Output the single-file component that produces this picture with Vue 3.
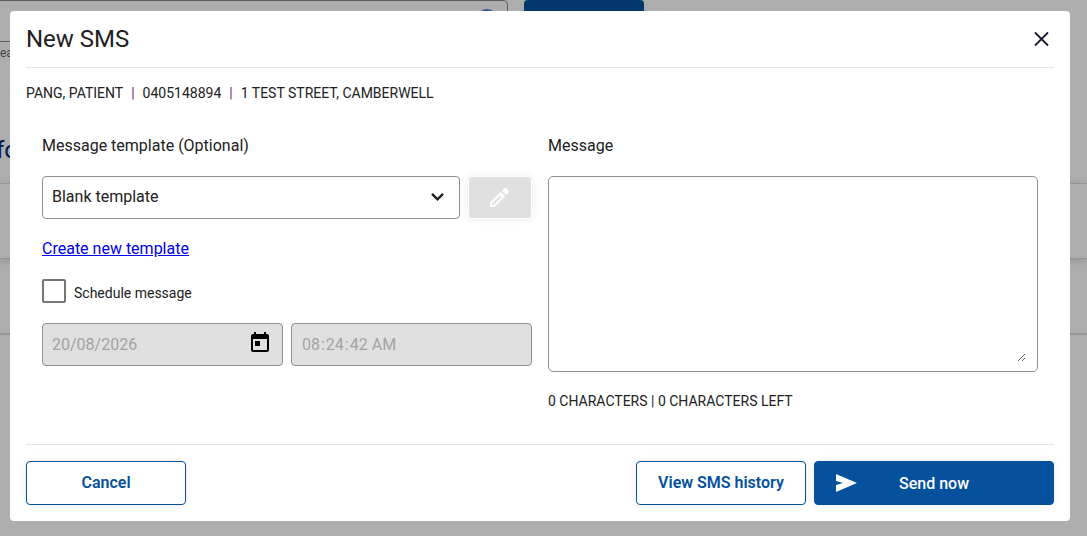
<script setup>
import { ref, computed } from 'vue'

const patient = ['PANG, PATIENT', '0405148894', '1 TEST STREET, CAMBERWELL']
const template = ref('blank')
const scheduled = ref(false)
const date = ref('20/08/2026')
const time = ref('08:24:42')
const message = ref('')
const count = computed(() => message.value.length)
</script>

<template>
  <div class="stage">
    <div class="page" aria-hidden="true">
      <div class="search-row">
        <div class="search-field"><span class="search-dot"></span></div>
        <div class="search-button"></div>
      </div>
      <div class="search-hint">ea</div>
      <div class="page-title">fo</div>
      <div class="panel"></div>
      <div class="page-rest"></div>
    </div>

    <div class="overlay">
      <section class="dialog" role="dialog" aria-labelledby="dialog-title">
        <header class="head">
          <h1 id="dialog-title">New SMS</h1>
          <button class="close" type="button" aria-label="Close">
            <svg viewBox="0 0 24 24" width="24" height="24">
              <path d="M5 5.500 18 18.500M18 5.500 5 18.500" fill="none" stroke="#1f1a33" stroke-width="1.8" />
            </svg>
          </button>
        </header>

        <div class="patient">
          <template v-for="(item, i) in patient" :key="item">
            <span v-if="i" class="bar">|</span>
            <span>{{ item }}</span>
          </template>
        </div>

        <div class="body">
          <div class="column">
            <label class="label" for="template">Message template (Optional)</label>
            <div class="template-row">
              <div class="select-wrap">
                <select id="template" v-model="template" class="field">
                  <option value="blank">Blank template</option>
                </select>
                <svg class="chevron" viewBox="0 0 24 24" width="24" height="24">
                  <path d="M7 9.800 12.500 15.300 18 9.800" fill="none" stroke="#212121" stroke-width="2.4" />
                </svg>
              </div>
              <button class="edit" type="button" disabled aria-label="Edit template">
                <svg viewBox="0 0 24 24" width="24" height="24" fill="#fff">
                  <path d="M2 16.500V21h4.500L17.200 10.300 12.700 5.800 2 16.500zM5.500 19H4v-1.500l8-8 1.500 1.500z" fill-rule="evenodd" />
                  <path d="M20.400 7.100a1.800 1.800 0 0 0 0-2.500l-2-2a1.800 1.800 0 0 0-2.500 0L13.900 4.600l4.500 4.500z" />
                </svg>
              </button>
            </div>
            <div class="link-row"><a href="#">Create new template</a></div>
            <label class="schedule">
              <input v-model="scheduled" type="checkbox" />
              <span>Schedule message</span>
            </label>
            <div class="when">
              <div class="date-wrap">
                <input v-model="date" class="field" type="text" aria-label="Date" :disabled="!scheduled" />
                <svg class="calendar" viewBox="0 0 24 24" width="24" height="24">
                  <path fill-rule="evenodd" d="M6 1h2v2h8V1h2v2h1a2 2 0 0 1 2 2v14a2 2 0 0 1-2 2H5a2 2 0 0 1-2-2V5a2 2 0 0 1 2-2h1zM5 8v11h14V8zM7 10h5v5H7z" />
                </svg>
              </div>
              <input v-model="time" class="field" type="time" step="1" aria-label="Time" :disabled="!scheduled" />
            </div>
          </div>

          <div class="column">
            <label class="label" for="message">Message</label>
            <div class="message-box">
              <textarea id="message" v-model="message"></textarea>
            </div>
            <div class="count">{{ count }} CHARACTERS | {{ count }} CHARACTERS LEFT</div>
          </div>
        </div>

        <footer class="foot">
          <button class="button cancel" type="button">Cancel</button>
          <button class="button history" type="button">View SMS history</button>
          <button class="button send" type="button">
            <svg viewBox="0 0 24 24" width="24" height="24">
              <path d="M3 3v7l7 2-7 2v7l21-9z" fill="#fff" />
            </svg>
            <span>Send now</span>
          </button>
        </footer>
      </section>
    </div>
  </div>
</template>

<style>
body {
  background: #adadad;
}
</style>

<style scoped>
* {
  box-sizing: border-box;
}
.stage {
  display: grid;
  min-height: 100vh;
  font-family: Roboto, "Liberation Sans", sans-serif;
  font-weight: 400;
  color: #212121;
}
.page,
.overlay {
  grid-area: 1 / 1;
  min-width: 0;
}
.page {
  display: flex;
  flex-direction: column;
  overflow: hidden;
  background: #fff;
}
.search-row {
  display: flex;
  gap: 16px;
  height: 42px;
}
.search-field {
  display: flex;
  justify-content: flex-end;
  flex: 0 0 508px;
  padding: 8px 10px;
  border: 1px solid #8a8a8a;
  border-left: 0;
  border-radius: 0 5px 5px 0;
}
.search-dot {
  width: 20px;
  height: 20px;
  border-radius: 50%;
  background: #4b7be5;
}
.search-button {
  flex: 0 0 120px;
  border-radius: 4px;
  background: #05519e;
}
.search-hint {
  height: 92px;
  font-size: 12px;
  line-height: 22px;
  color: #616161;
}
.page-title {
  height: 49px;
  margin-left: -4px;
  font-size: 24px;
  line-height: 32px;
  color: #00217d;
}
.panel {
  height: 76px;
  border: solid #dcdcdc;
  border-width: 1px 0;
  box-shadow: 0 2px 8px rgba(0, 0, 0, 0.16);
}
.page-rest {
  flex: 1;
  margin-top: 74px;
  border-top: 2px solid #dcdcdc;
}
.overlay {
  position: relative;
  padding: 11px 17px 15px 10px;
  background: rgba(0, 0, 0, 0.32);
}
.dialog {
  padding: 0 16px 16px;
  border-radius: 4px;
  background: #fff;
}
.head {
  display: flex;
  align-items: center;
  justify-content: space-between;
  height: 57px;
  border-bottom: 1px solid #e5e5ee;
}
h1 {
  margin: 0;
  font-size: 24px;
  font-weight: 400;
  line-height: 32px;
}
button {
  font-family: inherit;
  cursor: pointer;
}
svg {
  display: block;
}
.close {
  padding: 0;
  border: 0;
  background: none;
}
.patient {
  display: flex;
  gap: 8px;
  padding-top: 15px;
  font-size: 14px;
  line-height: 20px;
}
.bar {
  color: #7a1a7a;
}
.body {
  display: grid;
  grid-template-columns: 1fr 1fr;
  gap: 16px;
  padding: 32px 16px;
}
.column {
  display: flex;
  flex-direction: column;
  min-width: 0;
}
.label {
  margin-bottom: 19px;
  font-size: 16px;
  line-height: 22px;
}
.template-row {
  display: flex;
  gap: 8px;
}
.when {
  display: grid;
  grid-template-columns: 1fr 1fr;
  gap: 8px;
}
.select-wrap {
  position: relative;
  flex: 1;
}
.date-wrap {
  position: relative;
}
.field {
  display: block;
  width: 100%;
  height: 43px;
  margin: 0;
  padding: 0 9px;
  border: 1px solid #8f8f8f;
  border-radius: 4px;
  background: #fff;
  font-family: inherit;
  font-size: 16px;
  font-weight: 400;
  color: #212121;
  appearance: none;
}
select.field {
  padding-bottom: 2px;
}
.field:disabled {
  background: #e0e0e0;
  color: #a3a3a3;
  opacity: 1;
}
.field::-webkit-calendar-picker-indicator {
  display: none;
}
.chevron,
.calendar {
  position: absolute;
  top: 8px;
  right: 11px;
  pointer-events: none;
}
.edit {
  display: grid;
  place-items: center;
  width: 64px;
  border: 1px solid #fff;
  border-radius: 4px;
  background: #e0e0e0;
  box-shadow: 0 0 8px rgba(0, 0, 0, 0.08);
}
.link-row {
  padding: 19px 0;
  font-size: 16px;
  line-height: 22px;
}
a {
  color: #0000ee;
}
.schedule {
  display: flex;
  gap: 8px;
  margin-bottom: 20px;
  font-size: 14px;
  line-height: 28px;
  height: 24px;
}
.schedule input {
  width: 24px;
  height: 24px;
  margin: 0;
  border: 2px solid #757575;
  border-radius: 2px;
  background: #fff;
  appearance: none;
}
.schedule input:checked {
  background: #05519e;
}
.message-box {
  height: 196px;
  padding: 9px 11px 9px 10px;
  border: 1px solid #8f8f8f;
  border-radius: 5px;
}
textarea {
  display: block;
  width: 100%;
  height: 100%;
  padding: 0;
  border: 0;
  outline: 0;
  font-family: inherit;
  font-size: 16px;
  background: none;
}
.count {
  margin-top: 19px;
  font-size: 14px;
  line-height: 21px;
}
.foot {
  display: flex;
  gap: 8px;
  padding-top: 16px;
  border-top: 1px solid #e2e2f0;
}
.button {
  height: 44px;
  padding: 0 16px 2px;
  border: 1px solid #05519e;
  border-radius: 4px;
  background: #fff;
  box-shadow: 0 0 8px rgba(0, 0, 0, 0.08);
  font-size: 16px;
  font-weight: 600;
  color: #05519e;
}
.cancel {
  width: 160px;
  margin-right: auto;
}
.history {
  width: 170px;
}
.send {
  display: grid;
  grid-template-columns: 24px 1fr 24px;
  align-items: center;
  width: 240px;
  padding: 0 18px;
  background: #05519e;
  font-weight: 500;
  color: #fff;
}
</style>
